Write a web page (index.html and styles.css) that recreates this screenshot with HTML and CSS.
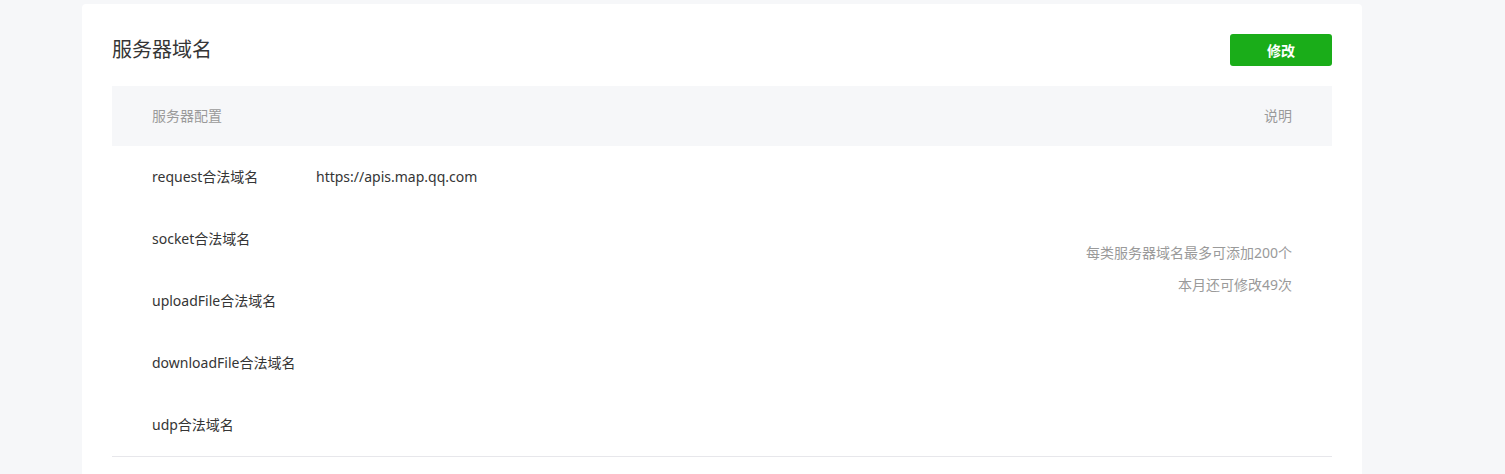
FILE: index.html
```html
<!DOCTYPE html>
<html lang="zh-CN">
<head>
  <meta charset="UTF-8">
  <title>服务器域名</title>
  <link rel="stylesheet" href="styles.css">
</head>
<body>

<section class="panel">
  <div class="panel-head">
    <h2>服务器域名</h2>
    <button class="btn-primary">修改</button>
  </div>

  <div class="domain-table">
    <div class="table-head">
      <span>服务器配置</span>
      <span>说明</span>
    </div>
    <div class="table-body">
      <div class="label row-1">request合法域名</div>
      <div class="value row-1">https://apis.map.qq.com</div>
      <div class="label row-2">socket合法域名</div>
      <div class="label row-3">uploadFile合法域名</div>
      <div class="label row-4">downloadFile合法域名</div>
      <div class="label row-5">udp合法域名</div>
      <div class="note">
        <p>每类服务器域名最多可添加200个</p>
        <p>本月还可修改49次</p>
      </div>
    </div>
  </div>
</section>

</body>
</html>
```

FILE: styles.css
```css
* {
  box-sizing: border-box;
  margin: 0;
  padding: 0;
}

body {
  font-family: "Noto Sans", "Noto Sans CJK SC", sans-serif;
  background: #f6f7f9;
  color: #353535;
  padding: 4px 0 0 82px;
}

.panel {
  width: 1280px;
  min-height: 480px;
  background: #fff;
  border-radius: 4px 4px 0 0;
  padding: 30px 30px 0;
}

.panel-head {
  display: flex;
  justify-content: space-between;
  align-items: center;
  height: 32px;
  margin-bottom: 20px;
}

.panel-head h2 {
  font-size: 20px;
  font-weight: normal;
  line-height: 32px;
}

.btn-primary {
  width: 102px;
  height: 32px;
  background: #1aad19;
  color: #fff;
  border: none;
  border-radius: 3px;
  font-family: inherit;
  font-size: 14px;
  font-weight: bold;
  cursor: pointer;
}

.table-head {
  display: flex;
  justify-content: space-between;
  height: 60px;
  line-height: 60px;
  padding: 0 40px;
  background: #f6f7f9;
  color: #9a9a9a;
  font-size: 14px;
}

.table-body {
  display: grid;
  grid-template-columns: 164px 1fr auto;
  grid-template-rows: repeat(5, 62px);
  padding: 0 40px;
  border-bottom: 1px solid #e7e7eb;
  font-size: 14px;
}

.label, .value {
  line-height: 62px;
  white-space: nowrap;
}

.label { grid-column: 1; }
.value { grid-column: 2; }
.row-1 { grid-row: 1; }
.row-2 { grid-row: 2; }
.row-3 { grid-row: 3; }
.row-4 { grid-row: 4; }
.row-5 { grid-row: 5; }

.note {
  grid-column: 3;
  grid-row: 1 / 6;
  padding-top: 91px;
  text-align: right;
  color: #9a9a9a;
  font-size: 14px;
  line-height: 32px;
}
```
